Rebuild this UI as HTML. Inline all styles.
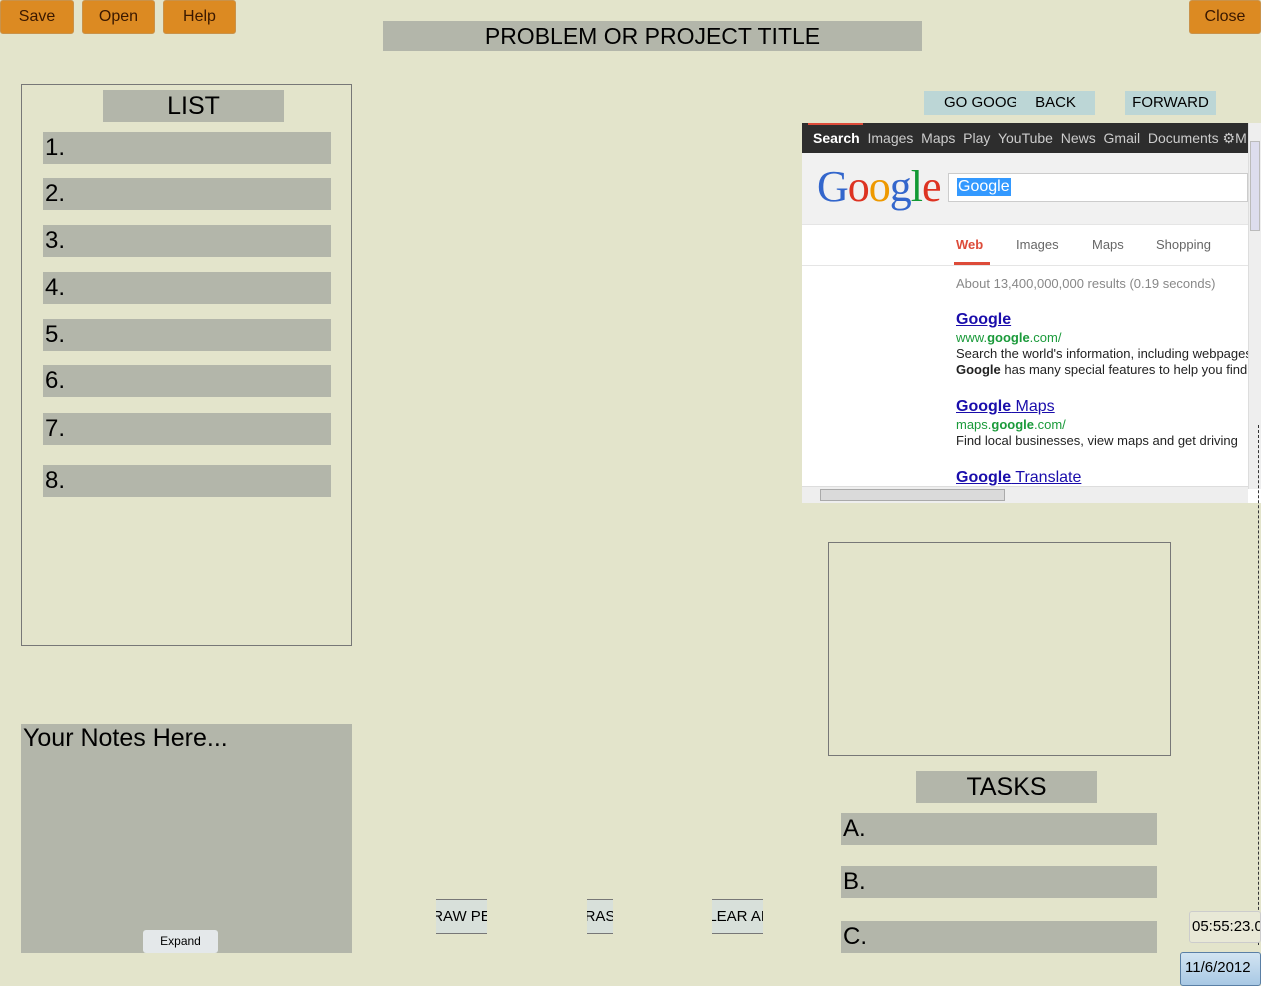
<!DOCTYPE html>
<html><head><meta charset="utf-8"><style>
*{box-sizing:border-box;margin:0;padding:0}
body{width:1261px;height:986px;background:#e3e4cb;font-family:"Liberation Sans",sans-serif;position:relative;overflow:hidden;color:#000}
.a{position:absolute}
.ob{position:absolute;top:0;height:34px;background:#dc8a22;border:1px solid #c9924a;border-radius:3px;color:#3a1800;font-size:16px;text-align:center;line-height:32px}
.g{position:absolute;background:#b3b6aa}
.li{position:absolute;left:43px;width:288px;height:32px;background:#b3b6aa;font-size:24px;line-height:32px;padding-left:2px}
.ti{position:absolute;left:841px;width:316px;height:32px;background:#b3b6aa;font-size:24px;line-height:32px;padding-left:2px}
.bl{position:absolute;background:#bcd6d6;font-size:15px;line-height:24px;text-align:center;overflow:hidden;white-space:nowrap}
.db{position:absolute;top:899px;height:35px;background:#d8e0da;border-top:1px solid #777;border-bottom:1px solid #777;font-size:15px;line-height:33px;overflow:hidden;white-space:nowrap;display:flex;justify-content:center}
.gn{color:#1a9a3a;font-size:13px}
.ds{font-size:13px;color:#222}
.lk{color:#1a0dab;text-decoration:underline;font-size:16px}
</style></head><body>
<div class="ob" style="left:0;width:74px">Save</div>
<div class="ob" style="left:82px;width:73px">Open</div>
<div class="ob" style="left:163px;width:73px">Help</div>
<div class="ob" style="left:1189px;width:72px">Close</div>
<div class="g" style="left:383px;top:21px;width:539px;height:30px;font-size:23px;text-align:center;line-height:30px">PROBLEM OR PROJECT TITLE</div>

<div class="a" style="left:21px;top:84px;width:331px;height:562px;border:1px solid #777"></div>
<div class="g" style="left:103px;top:90px;width:181px;height:32px;font-size:25px;text-align:center;line-height:32px">LIST</div>
<div class="li" style="top:132px">1.</div>
<div class="li" style="top:178px">2.</div>
<div class="li" style="top:225px">3.</div>
<div class="li" style="top:272px">4.</div>
<div class="li" style="top:319px">5.</div>
<div class="li" style="top:365px">6.</div>
<div class="li" style="top:413px">7.</div>
<div class="li" style="top:465px">8.</div>

<div class="g" style="left:21px;top:724px;width:331px;height:229px;font-size:25px;padding-left:2px;line-height:28px">Your Notes Here...</div>
<div class="a" style="left:143px;top:930px;width:75px;height:23px;background:#e4e8ea;border-radius:3px;font-size:12px;text-align:center;line-height:23px">Expand</div>

<div class="bl" style="left:924px;top:91px;width:92px;text-align:left;padding-left:20px">GO GOOGLE</div>
<div class="bl" style="left:1016px;top:91px;width:79px">BACK</div>
<div class="bl" style="left:1125px;top:91px;width:91px">FORWARD</div>

<div class="a" style="left:802px;top:123px;width:459px;height:380px;background:#fff;overflow:hidden">
 <div class="a" style="left:0;top:0;width:446px;height:30px;background:#2d2d2d;color:#ccc;font-size:14px;line-height:30px;white-space:nowrap;overflow:hidden">
  <div class="a" style="left:6px;top:0;width:55px;height:2px;background:#dd4b39"></div>
  <span style="margin-left:11px;color:#fff;font-weight:bold">Search</span>&nbsp; Images&nbsp; Maps&nbsp; Play&nbsp; YouTube&nbsp; News&nbsp; Gmail&nbsp; Documents ⚙M</div>
 <div class="a" style="left:0;top:30px;width:446px;height:72px;background:#f1f1f1;border-bottom:1px solid #e5e5e5"></div>
 <div class="a" style="left:15px;top:38px;font-family:'Liberation Serif',serif;font-size:44px;letter-spacing:-1px"><span style="color:#3366cc">G</span><span style="color:#dd3322">o</span><span style="color:#ee9900">o</span><span style="color:#3366cc">g</span><span style="color:#119933">l</span><span style="color:#dd3322">e</span></div>
 <div class="a" style="left:146px;top:50px;width:300px;height:29px;background:#fff;border:1px solid #ccc"><span style="position:absolute;left:8px;top:4px;background:#3399ff;color:#fff;font-size:16px;padding:0 1px">Google</span></div>
 <div class="a" style="left:154px;top:114px;font-size:13px;color:#dd4b39;font-weight:bold">Web</div>
 <div class="a" style="left:152px;top:139px;width:36px;height:3px;background:#dd4b39"></div>
 <div class="a" style="left:214px;top:114px;font-size:13px;color:#666">Images</div>
 <div class="a" style="left:290px;top:114px;font-size:13px;color:#666">Maps</div>
 <div class="a" style="left:354px;top:114px;font-size:13px;color:#666">Shopping</div>
 <div class="a" style="left:0;top:142px;width:446px;height:1px;background:#e5e5e5"></div>
 <div class="a" style="left:154px;top:153px;font-size:13px;color:#888;white-space:nowrap">About 13,400,000,000 results (0.19 seconds)</div>
 <div class="a" style="left:154px;top:189px;white-space:nowrap;line-height:16px">
  <div class="lk"><b>Google</b></div><div class="gn" style="margin-top:2px">www.<b>google</b>.com/</div>
  <div class="ds">Search the world's information, including webpages</div><div class="ds"><b>Google</b> has many special features to help you find</div>
  <div class="lk" style="margin-top:21px"><b>Google</b> Maps</div><div class="gn" style="margin-top:2px">maps.<b>google</b>.com/</div>
  <div class="ds">Find local businesses, view maps and get driving</div>
  <div class="lk" style="margin-top:21px"><b>Google</b> Translate</div>
 </div>
 <div class="a" style="left:446px;top:0;width:13px;height:366px;background:#eee;border-left:1px solid #ddd"><div style="margin:18px 1px;height:90px;background:#dde;border:1px solid #bbb"></div></div>
 <div class="a" style="left:0;top:363px;width:446px;height:17px;background:#eee;border-top:1px solid #ddd"><div style="margin:2px 18px;width:185px;height:12px;background:#dadada;border:1px solid #aaa"></div></div>
</div>
<div class="a" style="left:1258px;top:425px;width:0;height:520px;border-left:1px dashed #333"></div>

<div class="a" style="left:828px;top:542px;width:343px;height:214px;border:1px solid #777"></div>
<div class="g" style="left:916px;top:771px;width:181px;height:32px;font-size:25px;text-align:center;line-height:32px">TASKS</div>
<div class="ti" style="top:813px">A.</div>
<div class="ti" style="top:866px">B.</div>
<div class="ti" style="top:921px">C.</div>

<div class="db" style="left:436px;width:51px"><span>DRAW PEN</span></div>
<div class="db" style="left:587px;width:26px"><span>ERASE</span></div>
<div class="db" style="left:712px;width:51px"><span>CLEAR ALL</span></div>

<div class="a" style="left:1189px;top:911px;width:72px;height:32px;background:#e8e8d6;border:1px solid #ccc;border-radius:3px;font-size:15px;line-height:30px;padding-left:2px;white-space:nowrap;overflow:hidden">05:55:23.0</div>
<div class="a" style="left:1180px;top:952px;width:81px;height:34px;background:linear-gradient(#d2e4f2,#a8c8e4);border:1px solid #5a7fa5;border-radius:3px;font-size:15px;line-height:30px;padding-left:4px;white-space:nowrap">11/6/2012</div>
</body></html>
